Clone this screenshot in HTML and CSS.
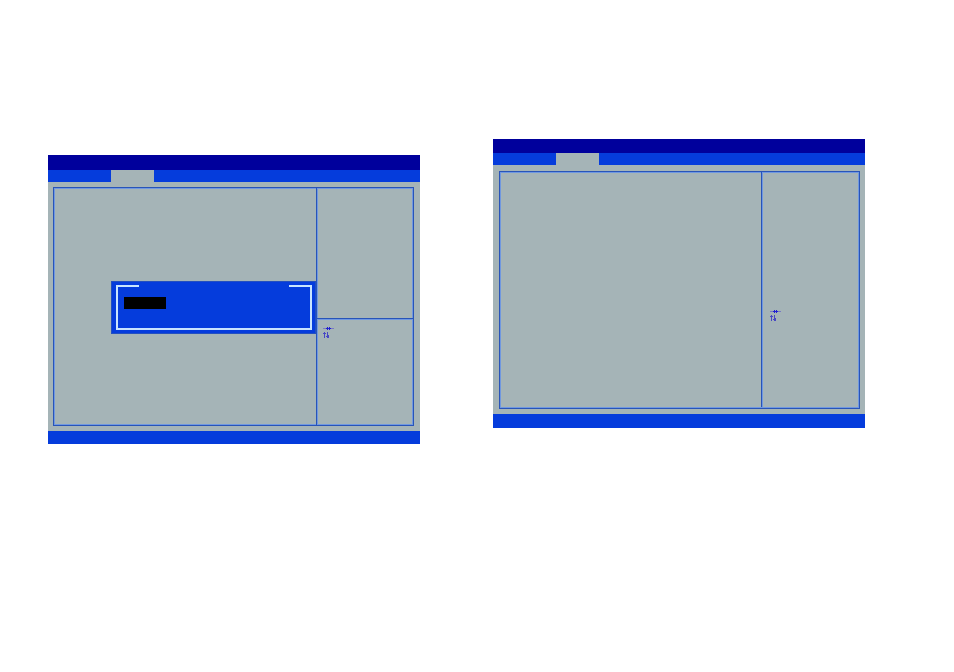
FILE: index.html
```
<!DOCTYPE html>
<html lang="en">
<head>
  <meta charset="UTF-8">
  <meta name="viewport" content="width=device-width, initial-scale=1.0">
  <title>Setup Utility</title>
  <link rel="stylesheet" href="styles.css">
</head>
<body>
  <main class="screens">
    <section class="screen screen-popup">
      <header class="title-bar"></header>
      <nav class="menu-bar"><button class="tab" type="button" aria-label="Advanced"></button></nav>
      <div class="content">
        <div class="frame">
          <div class="options">
            <div class="popup" role="dialog" aria-label="Options">
              <div class="popup-box">
                <div class="popup-title"></div>
                <button class="choice" type="button" aria-label="Selected option"></button>
              </div>
            </div>
          </div>
          <aside class="side">
            <div class="help"></div>
            <div class="keys">
              <svg class="arrows" viewBox="0 0 12 14" aria-hidden="true">
                <path class="faint" d="M0 2.5h11"/>
                <path d="M3 2.5h5M4.5 1v3M6.5 1v3"/>
                <path class="thin" d="M1.5 12V6M0 7.5h3M4.5 6v6M3 10.5h3M5.5 9v3"/>
              </svg>
            </div>
          </aside>
        </div>
      </div>
      <footer class="status-bar"></footer>
    </section>

    <section class="screen screen-plain">
      <header class="title-bar"></header>
      <nav class="menu-bar"><button class="tab" type="button" aria-label="Advanced"></button></nav>
      <div class="content">
        <div class="frame">
          <div class="options"></div>
          <aside class="side">
            <div class="help"></div>
            <div class="keys">
              <svg class="arrows" viewBox="0 0 12 14" aria-hidden="true">
                <path class="faint" d="M0 2.5h11"/>
                <path d="M3 2.5h5M4.5 1v3M6.5 1v3"/>
                <path class="thin" d="M1.5 12V6M0 7.5h3M4.5 6v6M3 10.5h3M5.5 9v3"/>
              </svg>
            </div>
          </aside>
        </div>
      </div>
      <footer class="status-bar"></footer>
    </section>
  </main>
</body>
</html>
```
FILE: styles.css
```
* {
  box-sizing: border-box;
}

body {
  margin: 0;
  background: #fff;
  font-family: "Liberation Mono", monospace;
}

.screens {
  display: flex;
  align-items: flex-start;
  gap: 73px;
  padding: 139px 89px 40px 48px;
}

.screen {
  flex: 1;
  background: #a5b4b7;
}

.screen-popup {
  margin-top: 16px;
}

.title-bar {
  height: 15px;
  background: #00009c;
}

.menu-bar {
  display: flex;
  height: 12px;
  padding-left: 63px;
  background: #053cdc;
}

.tab {
  width: 43px;
  padding: 0;
  border: none;
  background: #a5b4b7;
}

.content {
  padding: 5px 6px 5px 5px;
}

.frame {
  display: flex;
  height: 239px;
  border: 1px solid #2854b8;
  box-shadow: inset 0 0 0 1px #7098e0;
}

.options {
  position: relative;
  flex: 1;
}

.side {
  display: flex;
  flex-direction: column;
  width: 97px;
  border-left: 1px solid #2854b8;
  box-shadow: inset 1px 0 0 #7098e0;
}

.help {
  height: 130px;
}

.keys {
  flex: 1;
  padding: 7px 6px;
}

.screen-popup .keys {
  border-top: 1px solid #2854b8;
  box-shadow: inset 0 1px 0 #7098e0;
}

.arrows {
  display: block;
  width: 12px;
  height: 14px;
  fill: none;
  stroke: #2020d0;
}

.arrows .faint {
  stroke: #7878c4;
}

.arrows .thin {
  stroke: #4848c4;
}

/* second screen, no popup */
.screen-plain .title-bar {
  height: 14px;
}

.screen-plain .content {
  padding: 6px 5px 5px 6px;
}

.screen-plain .frame {
  height: 238px;
}

.screen-plain .side {
  width: 98px;
  margin-bottom: 1px;
}

.screen-plain .keys {
  padding: 7px 8px;
}

.screen-plain .status-bar {
  height: 14px;
}

/* popup over the options list */
.popup {
  position: absolute;
  top: 93px;
  left: 57px;
  right: 0;
  padding: 3px 3px 3px 4px;
  background: #053cdc;
  border: 1px solid #2450c0;
}

.popup-box {
  position: relative;
  height: 45px;
  padding: 10px 6px;
  border: 2px solid #c8e4ff;
}

.popup-title {
  position: absolute;
  top: -2px;
  left: 21px;
  right: 21px;
  height: 2px;
  background: #053cdc;
}

.choice {
  display: block;
  width: 42px;
  height: 12px;
  padding: 0;
  border: none;
  background: #000;
}

.status-bar {
  height: 13px;
  background: #053cdc;
}
```
